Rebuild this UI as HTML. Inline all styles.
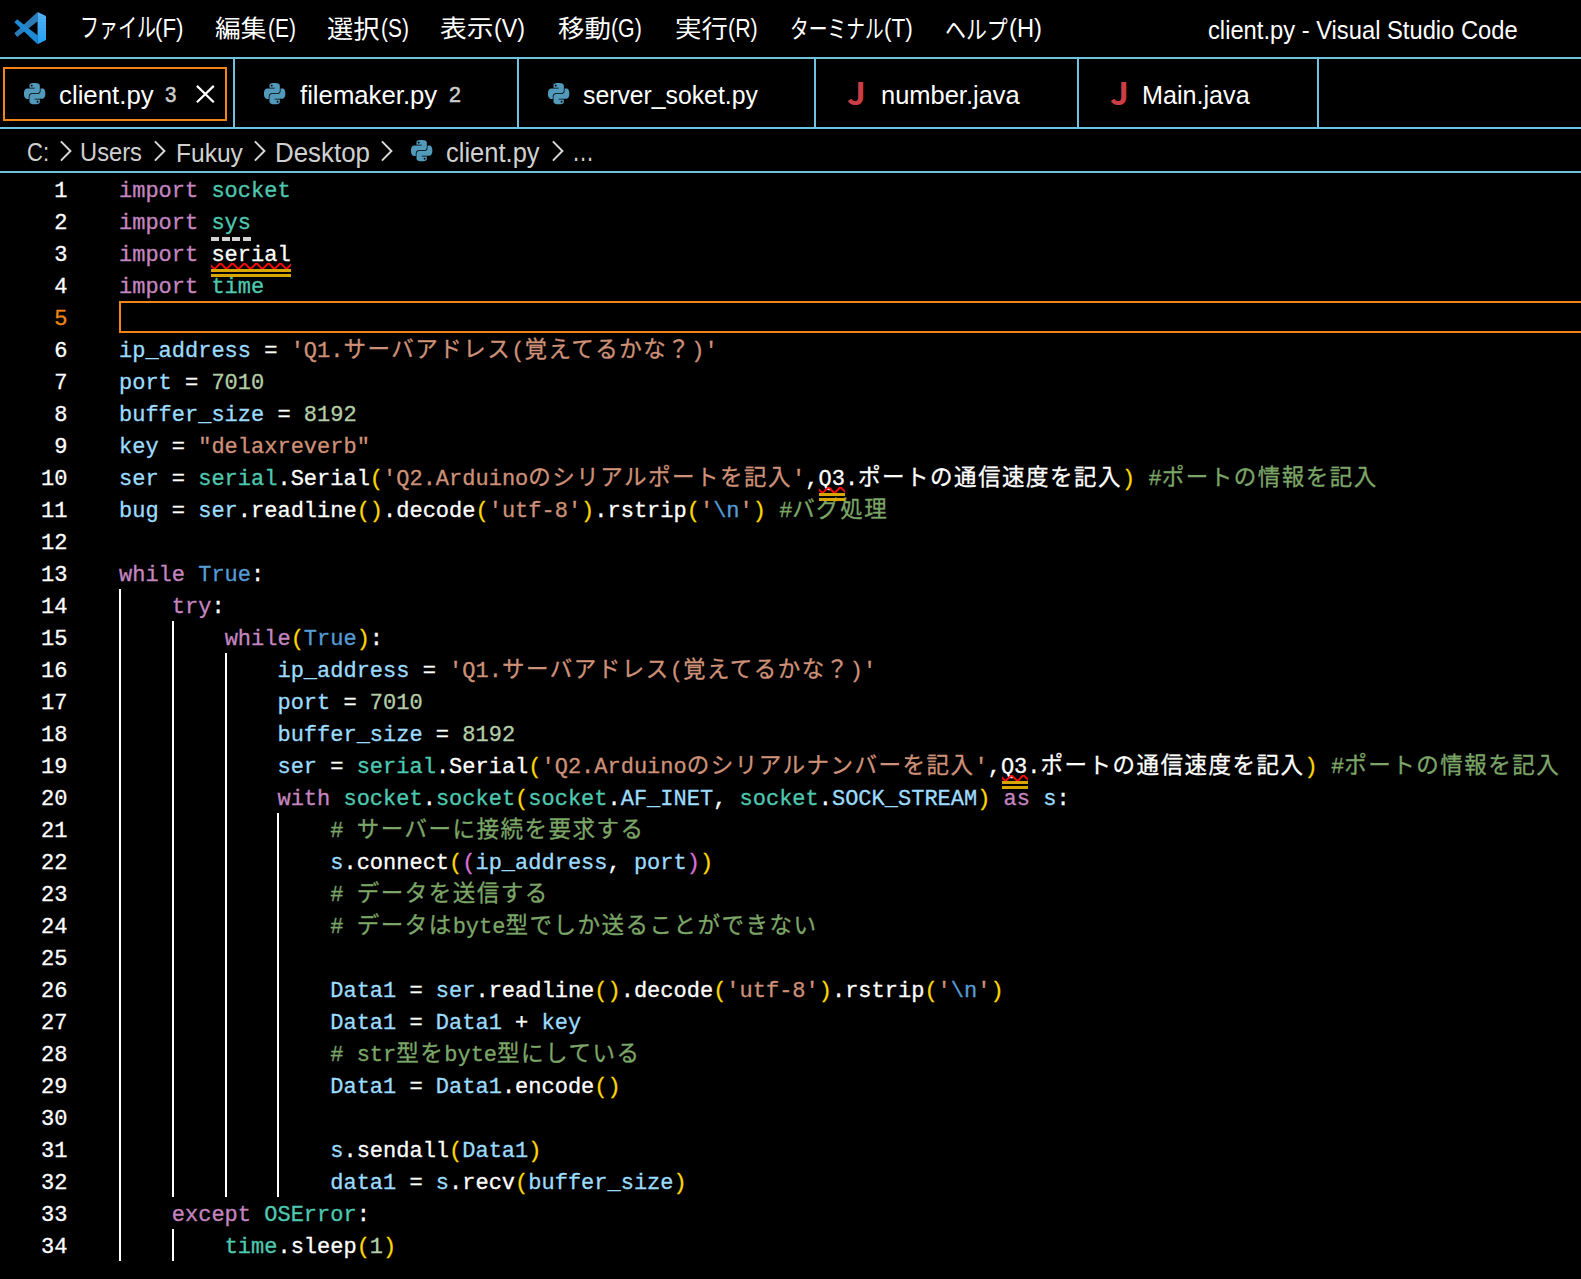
<!DOCTYPE html>
<html lang="ja">
<head>
<meta charset="utf-8">
<title>client.py - Visual Studio Code</title>
<style>
html,body{margin:0;padding:0;background:#000;}
body{width:1581px;height:1279px;overflow:hidden;position:relative;color:#fff;font-family:"Liberation Sans","Noto Sans CJK JP",sans-serif;}
.abs{position:absolute;white-space:pre;}
.u{position:absolute;height:60px;line-height:60px;white-space:pre;display:block;}
.hl{position:absolute;left:0;width:1581px;height:2px;background:#6fc3df;}
.vl{position:absolute;width:2px;background:#6fc3df;top:59px;height:68px;}
svg{position:absolute;overflow:visible;}
/* editor */
.ln{position:absolute;left:0;width:67.5px;height:32px;line-height:32px;margin-top:3px;text-align:right;font-family:"Liberation Mono","Noto Sans CJK JP",monospace;font-size:22px;color:#fff;white-space:pre;-webkit-text-stroke:0.3px currentColor;}
.ln.cur{color:#f38518;}
.l{position:absolute;left:119px;height:32px;line-height:32px;margin-top:3px;font-family:"Liberation Mono","Noto Sans CJK JP",monospace;font-size:22px;color:#fff;white-space:pre;-webkit-text-stroke:0.3px currentColor;}
.l i{font-style:normal;font-size:22.5px;letter-spacing:1.5px;line-height:0;-webkit-text-stroke:0.3px currentColor;}
.k{color:#c586c0}.m{color:#4ec9b0}.v{color:#9cdcfe}.s{color:#ce9178}.n{color:#b5cea8}.c{color:#7ca668}.b{color:#569cd6}.y{color:#ffd700}.p{color:#da70d6}.e{color:#569cd6}
.g{position:absolute;width:2px;background:#fff;}
.curline{position:absolute;left:119px;top:301px;width:1480px;height:28px;border:2px solid #f38518;}
.hd{position:absolute;width:8.2px;height:4px;background:#d2d2d2;}
.wl{position:absolute;height:3px;background:#d9a600;}
</style>
</head>
<body>
<!-- title bar -->
<svg id="vslogo" style="left:13.8px;top:11.9px" width="32.2" height="32.2" viewBox="0 0 100 100">
<polygon points="73.2,0 73.8,28.4 9.8,77.5 1.1,66.1" fill="#2a7db9"/>
<polygon points="1.1,32.2 9.8,22.5 73.8,72.7 73.2,100" fill="#1e8ad6"/>
<polygon points="73.2,0 99.5,12.6 99.5,13 73.2,13" fill="#52b2f7"/>
<rect x="73.2" y="12.60" width="26.3" height="9.59" fill="#4cb0f6"/>
<rect x="73.2" y="21.89" width="26.3" height="9.59" fill="#48aef5"/>
<rect x="73.2" y="31.18" width="26.3" height="9.59" fill="#43acf5"/>
<rect x="73.2" y="40.46" width="26.3" height="9.59" fill="#3eaaf4"/>
<rect x="73.2" y="49.75" width="26.3" height="9.59" fill="#3aa8f4"/>
<rect x="73.2" y="59.04" width="26.3" height="9.59" fill="#35a6f3"/>
<rect x="73.2" y="68.33" width="26.3" height="9.59" fill="#31a4f3"/>
<rect x="73.2" y="77.61" width="26.3" height="9.59" fill="#2ca2f2"/>
<polygon points="73.2,86.9 99.5,86.9 73.2,100" fill="#26a0f1"/>
</svg>
<div class="hl" style="top:57px"></div>
<!-- tabs -->
<div class="vl" style="left:233px"></div>
<div class="vl" style="left:517px"></div>
<div class="vl" style="left:814px"></div>
<div class="vl" style="left:1077px"></div>
<div class="vl" style="left:1317px"></div>
<div class="abs" style="left:3px;top:67px;width:220px;height:50px;border:2px solid #f38518"></div>
<svg style="left:196px;top:85px" width="18.7" height="18.2" viewBox="0 0 18.7 18.2"><path d="M0.9 0.9 L17.8 17.3 M17.8 0.9 L0.9 17.3" stroke="#fff" stroke-width="2.2" fill="none"/></svg>
<svg style="left:23.9px;top:82.75px" width="21.3" height="21.3" viewBox="0 0 24 24"><path fill="#519aba" d="M14.25.18l.9.2.73.26.59.3.45.32.34.34.25.34.16.33.1.3.04.26.02.2-.01.13V8.5l-.05.63-.13.55-.21.46-.26.38-.3.31-.33.25-.35.19-.35.14-.33.1-.3.07-.26.04-.21.02H8.77l-.69.05-.59.14-.5.22-.41.27-.33.32-.27.35-.2.36-.15.37-.1.35-.07.32-.04.27-.02.21v3.06H3.17l-.21-.03-.28-.07-.32-.12-.35-.18-.36-.26-.36-.36-.35-.46-.32-.59-.28-.73-.21-.88-.14-1.05-.05-1.23.06-1.22.16-1.04.24-.87.32-.71.36-.57.4-.44.42-.33.42-.24.4-.16.36-.1.32-.05.24-.01h.16l.06.01h8.16v-.83H6.18l-.01-2.75-.02-.37.05-.34.11-.31.17-.28.25-.26.31-.23.38-.2.44-.18.51-.15.58-.12.64-.1.71-.06.77-.04.84-.02 1.27.05zm-6.3 1.98l-.23.33-.08.41.08.41.23.34.33.22.41.09.41-.09.33-.22.23-.34.08-.41-.08-.41-.23-.33-.33-.22-.41-.09-.41.09zm13.09 3.95l.28.06.32.12.35.18.36.27.36.35.35.47.32.59.28.73.21.88.14 1.04.05 1.23-.06 1.23-.16 1.04-.24.86-.32.71-.36.57-.4.45-.42.33-.42.24-.4.16-.36.09-.32.05-.24.02-.16-.01h-8.22v.82h5.84l.01 2.76.02.36-.05.34-.11.31-.17.29-.25.25-.31.24-.38.2-.44.17-.51.15-.58.13-.64.09-.71.07-.77.04-.84.01-1.27-.04-1.07-.14-.9-.2-.73-.25-.59-.3-.45-.33-.34-.34-.25-.34-.16-.33-.1-.3-.04-.25-.02-.2.01-.13v-5.34l.05-.64.13-.54.21-.46.26-.38.3-.32.33-.24.35-.2.35-.14.33-.1.3-.06.26-.04.21-.02.13-.01h5.84l.69-.05.59-.14.5-.21.41-.28.33-.32.27-.35.2-.36.15-.36.1-.35.07-.32.04-.28.02-.21V6.07h2.09l.14.01zm-6.47 14.25l-.23.33-.08.41.08.41.23.33.33.23.41.08.41-.08.33-.23.23-.33.08-.41-.08-.41-.23-.33-.33-.23-.41-.08-.41.08z"/></svg>
<svg style="left:264px;top:82.75px" width="21.3" height="21.3" viewBox="0 0 24 24"><path fill="#519aba" d="M14.25.18l.9.2.73.26.59.3.45.32.34.34.25.34.16.33.1.3.04.26.02.2-.01.13V8.5l-.05.63-.13.55-.21.46-.26.38-.3.31-.33.25-.35.19-.35.14-.33.1-.3.07-.26.04-.21.02H8.77l-.69.05-.59.14-.5.22-.41.27-.33.32-.27.35-.2.36-.15.37-.1.35-.07.32-.04.27-.02.21v3.06H3.17l-.21-.03-.28-.07-.32-.12-.35-.18-.36-.26-.36-.36-.35-.46-.32-.59-.28-.73-.21-.88-.14-1.05-.05-1.23.06-1.22.16-1.04.24-.87.32-.71.36-.57.4-.44.42-.33.42-.24.4-.16.36-.1.32-.05.24-.01h.16l.06.01h8.16v-.83H6.18l-.01-2.75-.02-.37.05-.34.11-.31.17-.28.25-.26.31-.23.38-.2.44-.18.51-.15.58-.12.64-.1.71-.06.77-.04.84-.02 1.27.05zm-6.3 1.98l-.23.33-.08.41.08.41.23.34.33.22.41.09.41-.09.33-.22.23-.34.08-.41-.08-.41-.23-.33-.33-.22-.41-.09-.41.09zm13.09 3.95l.28.06.32.12.35.18.36.27.36.35.35.47.32.59.28.73.21.88.14 1.04.05 1.23-.06 1.23-.16 1.04-.24.86-.32.71-.36.57-.4.45-.42.33-.42.24-.4.16-.36.09-.32.05-.24.02-.16-.01h-8.22v.82h5.84l.01 2.76.02.36-.05.34-.11.31-.17.29-.25.25-.31.24-.38.2-.44.17-.51.15-.58.13-.64.09-.71.07-.77.04-.84.01-1.27-.04-1.07-.14-.9-.2-.73-.25-.59-.3-.45-.33-.34-.34-.25-.34-.16-.33-.1-.3-.04-.25-.02-.2.01-.13v-5.34l.05-.64.13-.54.21-.46.26-.38.3-.32.33-.24.35-.2.35-.14.33-.1.3-.06.26-.04.21-.02.13-.01h5.84l.69-.05.59-.14.5-.21.41-.28.33-.32.27-.35.2-.36.15-.36.1-.35.07-.32.04-.28.02-.21V6.07h2.09l.14.01zm-6.47 14.25l-.23.33-.08.41.08.41.23.33.33.23.41.08.41-.08.33-.23.23-.33.08-.41-.08-.41-.23-.33-.33-.23-.41-.08-.41.08z"/></svg>
<svg style="left:548.2px;top:82.75px" width="21.3" height="21.3" viewBox="0 0 24 24"><path fill="#519aba" d="M14.25.18l.9.2.73.26.59.3.45.32.34.34.25.34.16.33.1.3.04.26.02.2-.01.13V8.5l-.05.63-.13.55-.21.46-.26.38-.3.31-.33.25-.35.19-.35.14-.33.1-.3.07-.26.04-.21.02H8.77l-.69.05-.59.14-.5.22-.41.27-.33.32-.27.35-.2.36-.15.37-.1.35-.07.32-.04.27-.02.21v3.06H3.17l-.21-.03-.28-.07-.32-.12-.35-.18-.36-.26-.36-.36-.35-.46-.32-.59-.28-.73-.21-.88-.14-1.05-.05-1.23.06-1.22.16-1.04.24-.87.32-.71.36-.57.4-.44.42-.33.42-.24.4-.16.36-.1.32-.05.24-.01h.16l.06.01h8.16v-.83H6.18l-.01-2.75-.02-.37.05-.34.11-.31.17-.28.25-.26.31-.23.38-.2.44-.18.51-.15.58-.12.64-.1.71-.06.77-.04.84-.02 1.27.05zm-6.3 1.98l-.23.33-.08.41.08.41.23.34.33.22.41.09.41-.09.33-.22.23-.34.08-.41-.08-.41-.23-.33-.33-.22-.41-.09-.41.09zm13.09 3.95l.28.06.32.12.35.18.36.27.36.35.35.47.32.59.28.73.21.88.14 1.04.05 1.23-.06 1.23-.16 1.04-.24.86-.32.71-.36.57-.4.45-.42.33-.42.24-.4.16-.36.09-.32.05-.24.02-.16-.01h-8.22v.82h5.84l.01 2.76.02.36-.05.34-.11.31-.17.29-.25.25-.31.24-.38.2-.44.17-.51.15-.58.13-.64.09-.71.07-.77.04-.84.01-1.27-.04-1.07-.14-.9-.2-.73-.25-.59-.3-.45-.33-.34-.34-.25-.34-.16-.33-.1-.3-.04-.25-.02-.2.01-.13v-5.34l.05-.64.13-.54.21-.46.26-.38.3-.32.33-.24.35-.2.35-.14.33-.1.3-.06.26-.04.21-.02.13-.01h5.84l.69-.05.59-.14.5-.21.41-.28.33-.32.27-.35.2-.36.15-.36.1-.35.07-.32.04-.28.02-.21V6.07h2.09l.14.01zm-6.47 14.25l-.23.33-.08.41.08.41.23.33.33.23.41.08.41-.08.33-.23.23-.33.08-.41-.08-.41-.23-.33-.33-.23-.41-.08-.41.08z"/></svg>
<svg style="left:411px;top:139.8px" width="21.3" height="21.3" viewBox="0 0 24 24"><path fill="#519aba" d="M14.25.18l.9.2.73.26.59.3.45.32.34.34.25.34.16.33.1.3.04.26.02.2-.01.13V8.5l-.05.63-.13.55-.21.46-.26.38-.3.31-.33.25-.35.19-.35.14-.33.1-.3.07-.26.04-.21.02H8.77l-.69.05-.59.14-.5.22-.41.27-.33.32-.27.35-.2.36-.15.37-.1.35-.07.32-.04.27-.02.21v3.06H3.17l-.21-.03-.28-.07-.32-.12-.35-.18-.36-.26-.36-.36-.35-.46-.32-.59-.28-.73-.21-.88-.14-1.05-.05-1.23.06-1.22.16-1.04.24-.87.32-.71.36-.57.4-.44.42-.33.42-.24.4-.16.36-.1.32-.05.24-.01h.16l.06.01h8.16v-.83H6.18l-.01-2.75-.02-.37.05-.34.11-.31.17-.28.25-.26.31-.23.38-.2.44-.18.51-.15.58-.12.64-.1.71-.06.77-.04.84-.02 1.27.05zm-6.3 1.98l-.23.33-.08.41.08.41.23.34.33.22.41.09.41-.09.33-.22.23-.34.08-.41-.08-.41-.23-.33-.33-.22-.41-.09-.41.09zm13.09 3.95l.28.06.32.12.35.18.36.27.36.35.35.47.32.59.28.73.21.88.14 1.04.05 1.23-.06 1.23-.16 1.04-.24.86-.32.71-.36.57-.4.45-.42.33-.42.24-.4.16-.36.09-.32.05-.24.02-.16-.01h-8.22v.82h5.84l.01 2.76.02.36-.05.34-.11.31-.17.29-.25.25-.31.24-.38.2-.44.17-.51.15-.58.13-.64.09-.71.07-.77.04-.84.01-1.27-.04-1.07-.14-.9-.2-.73-.25-.59-.3-.45-.33-.34-.34-.25-.34-.16-.33-.1-.3-.04-.25-.02-.2.01-.13v-5.34l.05-.64.13-.54.21-.46.26-.38.3-.32.33-.24.35-.2.35-.14.33-.1.3-.06.26-.04.21-.02.13-.01h5.84l.69-.05.59-.14.5-.21.41-.28.33-.32.27-.35.2-.36.15-.36.1-.35.07-.32.04-.28.02-.21V6.07h2.09l.14.01zm-6.47 14.25l-.23.33-.08.41.08.41.23.33.33.23.41.08.41-.08.33-.23.23-.33.08-.41-.08-.41-.23-.33-.33-.23-.41-.08-.41.08z"/></svg>
<svg style="left:59.6px;top:140px" width="12" height="22" viewBox="0 0 12 22"><path d="M0.9 1.4 L10.4 11 L0.9 20.6" stroke="#d8d8d8" stroke-width="2" fill="none"/></svg>
<svg style="left:154.3px;top:140px" width="12" height="22" viewBox="0 0 12 22"><path d="M0.9 1.4 L10.4 11 L0.9 20.6" stroke="#d8d8d8" stroke-width="2" fill="none"/></svg>
<svg style="left:254.3px;top:140px" width="12" height="22" viewBox="0 0 12 22"><path d="M0.9 1.4 L10.4 11 L0.9 20.6" stroke="#d8d8d8" stroke-width="2" fill="none"/></svg>
<svg style="left:380.6px;top:140px" width="12" height="22" viewBox="0 0 12 22"><path d="M0.9 1.4 L10.4 11 L0.9 20.6" stroke="#d8d8d8" stroke-width="2" fill="none"/></svg>
<svg style="left:552.3px;top:140px" width="12" height="22" viewBox="0 0 12 22"><path d="M0.9 1.4 L10.4 11 L0.9 20.6" stroke="#d8d8d8" stroke-width="2" fill="none"/></svg>
<div class="hl" style="top:127px"></div>
<!-- breadcrumbs -->
<div class="hl" style="top:171px"></div>
<div class="ug"><span class="u" style="left:79.60px;top:-1.60px;font-size:26px;color:#fff;transform-origin:0 42px;transform:scale(0.7320,1.0043)">ファイル</span><span class="u" style="left:154.74px;top:-2.30px;font-size:26px;color:#fff;transform-origin:0 44px;transform:scale(0.8581,0.9625)">(F)</span></div>
<div class="ug"><span class="u" style="left:215.40px;top:-1.80px;font-size:26px;color:#fff;transform-origin:0 42px;transform:scale(0.9882,0.9154)">編集</span><span class="u" style="left:267.79px;top:-2.30px;font-size:26px;color:#fff;transform-origin:0 44px;transform:scale(0.8061,0.9625)">(E)</span></div>
<div class="ug"><span class="u" style="left:327.49px;top:-0.80px;font-size:26px;color:#fff;transform-origin:0 41px;transform:scale(1.0098,0.9520)">選択</span><span class="u" style="left:381.20px;top:-2.30px;font-size:26px;color:#fff;transform-origin:0 44px;transform:scale(0.8030,0.9625)">(S)</span></div>
<div class="ug"><span class="u" style="left:440.47px;top:-1.80px;font-size:26px;color:#fff;transform-origin:0 42px;transform:scale(1.0300,0.9154)">表示</span><span class="u" style="left:494.11px;top:-2.30px;font-size:26px;color:#fff;transform-origin:0 44px;transform:scale(0.8939,0.9625)">(V)</span></div>
<div class="ug"><span class="u" style="left:558.00px;top:-1.80px;font-size:26px;color:#fff;transform-origin:0 42px;transform:scale(1.0196,0.9154)">移動</span><span class="u" style="left:611.18px;top:-2.30px;font-size:26px;color:#fff;transform-origin:0 44px;transform:scale(0.8194,0.9625)">(G)</span></div>
<div class="ug"><span class="u" style="left:674.98px;top:-1.80px;font-size:26px;color:#fff;transform-origin:0 42px;transform:scale(1.0200,0.9154)">実行</span><span class="u" style="left:728.18px;top:-2.30px;font-size:26px;color:#fff;transform-origin:0 44px;transform:scale(0.8235,0.9625)">(R)</span></div>
<div class="ug"><span class="u" style="left:790.06px;top:-0.60px;font-size:26px;color:#fff;transform-origin:0 41px;transform:scale(0.7205,0.9625)">ターミナル</span><span class="u" style="left:884.13px;top:-2.30px;font-size:26px;color:#fff;transform-origin:0 44px;transform:scale(0.8710,0.9625)">(T)</span></div>
<div class="ug"><span class="u" style="left:945.19px;top:0.40px;font-size:26px;color:#fff;transform-origin:0 40px;transform:scale(0.8052,0.9625)">ヘルプ</span><span class="u" style="left:1009.09px;top:-2.30px;font-size:26px;color:#fff;transform-origin:0 44px;transform:scale(0.9118,0.9625)">(H)</span></div>
<div class="ug"><span class="u" style="left:1207.71px;top:0.50px;font-size:24px;color:#fff;transform-origin:0 43px;transform:scale(0.9891,1.0455)">client.py - Visual Studio Code</span></div>
<div class="ug"><span class="u" style="left:58.51px;top:65.20px;font-size:26px;color:#fff;transform-origin:0 44px;transform:scale(0.9926,1.0208)">client.py</span><span class="u" style="left:164.70px;top:65.40px;font-size:22px;color:#cdcdcd;-webkit-text-stroke:0.5px currentColor;transform-origin:0 38px;transform:scale(0.9333,1.0294)">3</span></div>
<div class="ug"><span class="u" style="left:300.20px;top:65.20px;font-size:26px;color:#fff;transform-origin:0 44px;transform:scale(0.9892,1.0208)">filemaker.py</span><span class="u" style="left:448.80px;top:65.30px;font-size:22px;color:#cdcdcd;-webkit-text-stroke:0.5px currentColor;transform-origin:0 38px;transform:scale(0.9750,1.0235)">2</span></div>
<div class="ug"><span class="u" style="left:582.65px;top:65.20px;font-size:26px;color:#fff;transform-origin:0 44px;transform:scale(0.9525,1.0208)">server_soket.py</span></div>
<div class="ug"><span class="u" style="left:847.39px;top:62.30px;font-size:30px;color:#cc3e44;font-family:'Noto Sans CJK JP',sans-serif;font-weight:bold;transform-origin:0 43px;transform:scale(1.1071,1.0318)">J</span><span class="u" style="left:880.52px;top:65.20px;font-size:26px;color:#fff;transform-origin:0 44px;transform:scale(0.9794,1.0208)">number.java</span></div>
<div class="ug"><span class="u" style="left:1109.89px;top:62.30px;font-size:30px;color:#cc3e44;font-family:'Noto Sans CJK JP',sans-serif;font-weight:bold;transform-origin:0 43px;transform:scale(1.1143,1.0318)">J</span><span class="u" style="left:1141.67px;top:65.20px;font-size:26px;color:#fff;transform-origin:0 44px;transform:scale(0.9673,1.0000)">Main.java</span></div>
<div class="ug"><span class="u" style="left:27.15px;top:122.00px;font-size:26px;color:#d0d0d0;transform-origin:0 39px;transform:scale(0.8478,1.0222)">C:</span></div>
<div class="ug"><span class="u" style="left:80.48px;top:122.00px;font-size:26px;color:#d0d0d0;transform-origin:0 39px;transform:scale(0.9121,1.0222)">Users</span></div>
<div class="ug"><span class="u" style="left:175.51px;top:122.60px;font-size:26px;color:#d0d0d0;transform-origin:0 44px;transform:scale(0.9449,1.0000)">Fukuy</span></div>
<div class="ug"><span class="u" style="left:275.01px;top:122.60px;font-size:26px;color:#d0d0d0;transform-origin:0 44px;transform:scale(0.9957,1.0417)">Desktop</span></div>
<div class="ug"><span class="u" style="left:445.82px;top:122.60px;font-size:26px;color:#d0d0d0;transform-origin:0 44px;transform:scale(0.9811,1.0417)">client.py</span></div>
<div class="ug"><span class="u" style="left:571.75px;top:122.00px;font-size:26px;color:#d0d0d0;transform-origin:0 39px;transform:scale(0.8500,1.1333)">…</span></div>
<!-- editor -->
<div class="curline"></div>
<div class="g" style="left:119px;top:589px;height:672px"></div>
<div class="g" style="left:172px;top:621px;height:576px"></div>
<div class="g" style="left:172px;top:1229px;height:32px"></div>
<div class="g" style="left:225px;top:653px;height:544px"></div>
<div class="g" style="left:277px;top:813px;height:384px"></div>
<div class="ln" style="top:173px">1</div>
<div class="l" style="top:173px"><span class="k">import</span> <span class="m">socket</span></div>
<div class="ln" style="top:205px">2</div>
<div class="l" style="top:205px"><span class="k">import</span> <span class="m u-hint">sys</span></div>
<div class="ln" style="top:237px">3</div>
<div class="l" style="top:237px"><span class="k">import</span> <span class="w u-err">serial</span></div>
<div class="ln" style="top:269px">4</div>
<div class="l" style="top:269px"><span class="k">import</span> <span class="m">time</span></div>
<div class="ln cur" style="top:301px">5</div>
<div class="ln" style="top:333px">6</div>
<div class="l" style="top:333px"><span class="v">ip_address</span> = <span class="s">&#x27;Q1.<i>サーバアドレス</i>(<i>覚えてるかな？</i>)&#x27;</span></div>
<div class="ln" style="top:365px">7</div>
<div class="l" style="top:365px"><span class="v">port</span> = <span class="n">7010</span></div>
<div class="ln" style="top:397px">8</div>
<div class="l" style="top:397px"><span class="v">buffer_size</span> = <span class="n">8192</span></div>
<div class="ln" style="top:429px">9</div>
<div class="l" style="top:429px"><span class="v">key</span> = <span class="s">&quot;delaxreverb&quot;</span></div>
<div class="ln" style="top:461px">10</div>
<div class="l" style="top:461px"><span class="v">ser</span> = <span class="m">serial</span>.Serial<span class="y">(</span><span class="s">&#x27;Q2.Arduino<i>のシリアルポートを記入</i>&#x27;</span>,<span class="w u-err2">Q3</span>.<i>ポートの通信速度を記入</i><span class="y">)</span> <span class="c">#<i>ポートの情報を記入</i></span></div>
<div class="ln" style="top:493px">11</div>
<div class="l" style="top:493px"><span class="v">bug</span> = <span class="v">ser</span>.readline<span class="y">()</span>.decode<span class="y">(</span><span class="s">&#x27;utf-8&#x27;</span><span class="y">)</span>.rstrip<span class="y">(</span><span class="s">&#x27;</span><span class="e">\n</span><span class="s">&#x27;</span><span class="y">)</span> <span class="c">#<i>バグ処理</i></span></div>
<div class="ln" style="top:525px">12</div>
<div class="ln" style="top:557px">13</div>
<div class="l" style="top:557px"><span class="k">while</span> <span class="b">True</span>:</div>
<div class="ln" style="top:589px">14</div>
<div class="l" style="top:589px">    <span class="k">try</span>:</div>
<div class="ln" style="top:621px">15</div>
<div class="l" style="top:621px">        <span class="k">while</span><span class="y">(</span><span class="b">True</span><span class="y">)</span>:</div>
<div class="ln" style="top:653px">16</div>
<div class="l" style="top:653px">            <span class="v">ip_address</span> = <span class="s">&#x27;Q1.<i>サーバアドレス</i>(<i>覚えてるかな？</i>)&#x27;</span></div>
<div class="ln" style="top:685px">17</div>
<div class="l" style="top:685px">            <span class="v">port</span> = <span class="n">7010</span></div>
<div class="ln" style="top:717px">18</div>
<div class="l" style="top:717px">            <span class="v">buffer_size</span> = <span class="n">8192</span></div>
<div class="ln" style="top:749px">19</div>
<div class="l" style="top:749px">            <span class="v">ser</span> = <span class="m">serial</span>.Serial<span class="y">(</span><span class="s">&#x27;Q2.Arduino<i>のシリアルナンバーを記入</i>&#x27;</span>,<span class="w u-err2">Q3</span>.<i>ポートの通信速度を記入</i><span class="y">)</span> <span class="c">#<i>ポートの情報を記入</i></span></div>
<div class="ln" style="top:781px">20</div>
<div class="l" style="top:781px">            <span class="k">with</span> <span class="m">socket</span>.<span class="m">socket</span><span class="y">(</span><span class="m">socket</span>.<span class="v">AF_INET</span>, <span class="m">socket</span>.<span class="v">SOCK_STREAM</span><span class="y">)</span> <span class="k">as</span> <span class="v">s</span>:</div>
<div class="ln" style="top:813px">21</div>
<div class="l" style="top:813px">                <span class="c"># <i>サーバーに接続を要求する</i></span></div>
<div class="ln" style="top:845px">22</div>
<div class="l" style="top:845px">                <span class="v">s</span>.connect<span class="y">(</span><span class="p">(</span><span class="v">ip_address</span>, <span class="v">port</span><span class="p">)</span><span class="y">)</span></div>
<div class="ln" style="top:877px">23</div>
<div class="l" style="top:877px">                <span class="c"># <i>データを送信する</i></span></div>
<div class="ln" style="top:909px">24</div>
<div class="l" style="top:909px">                <span class="c"># <i>データは</i>byte<i>型でしか送ることができない</i></span></div>
<div class="ln" style="top:941px">25</div>
<div class="ln" style="top:973px">26</div>
<div class="l" style="top:973px">                <span class="v">Data1</span> = <span class="v">ser</span>.readline<span class="y">()</span>.decode<span class="y">(</span><span class="s">&#x27;utf-8&#x27;</span><span class="y">)</span>.rstrip<span class="y">(</span><span class="s">&#x27;</span><span class="e">\n</span><span class="s">&#x27;</span><span class="y">)</span></div>
<div class="ln" style="top:1005px">27</div>
<div class="l" style="top:1005px">                <span class="v">Data1</span> = <span class="v">Data1</span> + <span class="v">key</span></div>
<div class="ln" style="top:1037px">28</div>
<div class="l" style="top:1037px">                <span class="c"># str<i>型を</i>byte<i>型にしている</i></span></div>
<div class="ln" style="top:1069px">29</div>
<div class="l" style="top:1069px">                <span class="v">Data1</span> = <span class="v">Data1</span>.encode<span class="y">()</span></div>
<div class="ln" style="top:1101px">30</div>
<div class="ln" style="top:1133px">31</div>
<div class="l" style="top:1133px">                <span class="v">s</span>.sendall<span class="y">(</span><span class="v">Data1</span><span class="y">)</span></div>
<div class="ln" style="top:1165px">32</div>
<div class="l" style="top:1165px">                <span class="v">data1</span> = <span class="v">s</span>.recv<span class="y">(</span><span class="v">buffer_size</span><span class="y">)</span></div>
<div class="ln" style="top:1197px">33</div>
<div class="l" style="top:1197px">    <span class="k">except</span> <span class="m">OSError</span>:</div>
<div class="ln" style="top:1229px">34</div>
<div class="l" style="top:1229px">        <span class="m">time</span>.sleep<span class="y">(</span><span class="n">1</span><span class="y">)</span></div>
<div class="hd" style="left:211px;top:237px"></div>
<div class="hd" style="left:221.6px;top:237px"></div>
<div class="hd" style="left:232.2px;top:237px"></div>
<div class="hd" style="left:242.8px;top:237px"></div>
<svg style="left:211.4px;top:263px;overflow:hidden" width="79.6" height="6" viewBox="0 0 79.6 6"><g fill="#ff0a0a"><polygon points="11,0 5,6 2.2,6 8.2,0"/><polygon points="8,0 12,4 12,1.2 10.8,0"/><polygon points="0,4 2,6 4.8,6 0,1.2"/><polygon points="23,0 17,6 14.2,6 20.2,0"/><polygon points="20,0 24,4 24,1.2 22.8,0"/><polygon points="12,4 14,6 16.8,6 12,1.2"/><polygon points="35,0 29,6 26.2,6 32.2,0"/><polygon points="32,0 36,4 36,1.2 34.8,0"/><polygon points="24,4 26,6 28.8,6 24,1.2"/><polygon points="47,0 41,6 38.2,6 44.2,0"/><polygon points="44,0 48,4 48,1.2 46.8,0"/><polygon points="36,4 38,6 40.8,6 36,1.2"/><polygon points="59,0 53,6 50.2,6 56.2,0"/><polygon points="56,0 60,4 60,1.2 58.8,0"/><polygon points="48,4 50,6 52.8,6 48,1.2"/><polygon points="71,0 65,6 62.2,6 68.2,0"/><polygon points="68,0 72,4 72,1.2 70.8,0"/><polygon points="60,4 62,6 64.8,6 60,1.2"/><polygon points="83,0 77,6 74.2,6 80.2,0"/><polygon points="80,0 84,4 84,1.2 82.8,0"/><polygon points="72,4 74,6 76.8,6 72,1.2"/></g></svg><div class="wl" style="left:211.4px;top:269px;width:79.6px"></div><div class="wl" style="left:211.4px;top:274px;width:79.6px"></div>
<svg style="left:819px;top:487px;overflow:hidden" width="26.4" height="6" viewBox="0 0 26.4 6"><g fill="#ff0a0a"><polygon points="11,0 5,6 2.2,6 8.2,0"/><polygon points="8,0 12,4 12,1.2 10.8,0"/><polygon points="0,4 2,6 4.8,6 0,1.2"/><polygon points="23,0 17,6 14.2,6 20.2,0"/><polygon points="20,0 24,4 24,1.2 22.8,0"/><polygon points="12,4 14,6 16.8,6 12,1.2"/><polygon points="35,0 29,6 26.2,6 32.2,0"/><polygon points="32,0 36,4 36,1.2 34.8,0"/><polygon points="24,4 26,6 28.8,6 24,1.2"/></g></svg><div class="wl" style="left:819px;top:493px;width:26.4px"></div><div class="wl" style="left:819px;top:498px;width:26.4px"></div>
<svg style="left:1002px;top:775px;overflow:hidden" width="26.4" height="6" viewBox="0 0 26.4 6"><g fill="#ff0a0a"><polygon points="11,0 5,6 2.2,6 8.2,0"/><polygon points="8,0 12,4 12,1.2 10.8,0"/><polygon points="0,4 2,6 4.8,6 0,1.2"/><polygon points="23,0 17,6 14.2,6 20.2,0"/><polygon points="20,0 24,4 24,1.2 22.8,0"/><polygon points="12,4 14,6 16.8,6 12,1.2"/><polygon points="35,0 29,6 26.2,6 32.2,0"/><polygon points="32,0 36,4 36,1.2 34.8,0"/><polygon points="24,4 26,6 28.8,6 24,1.2"/></g></svg><div class="wl" style="left:1002px;top:781px;width:26.4px"></div><div class="wl" style="left:1002px;top:786px;width:26.4px"></div>
</body>
</html>
